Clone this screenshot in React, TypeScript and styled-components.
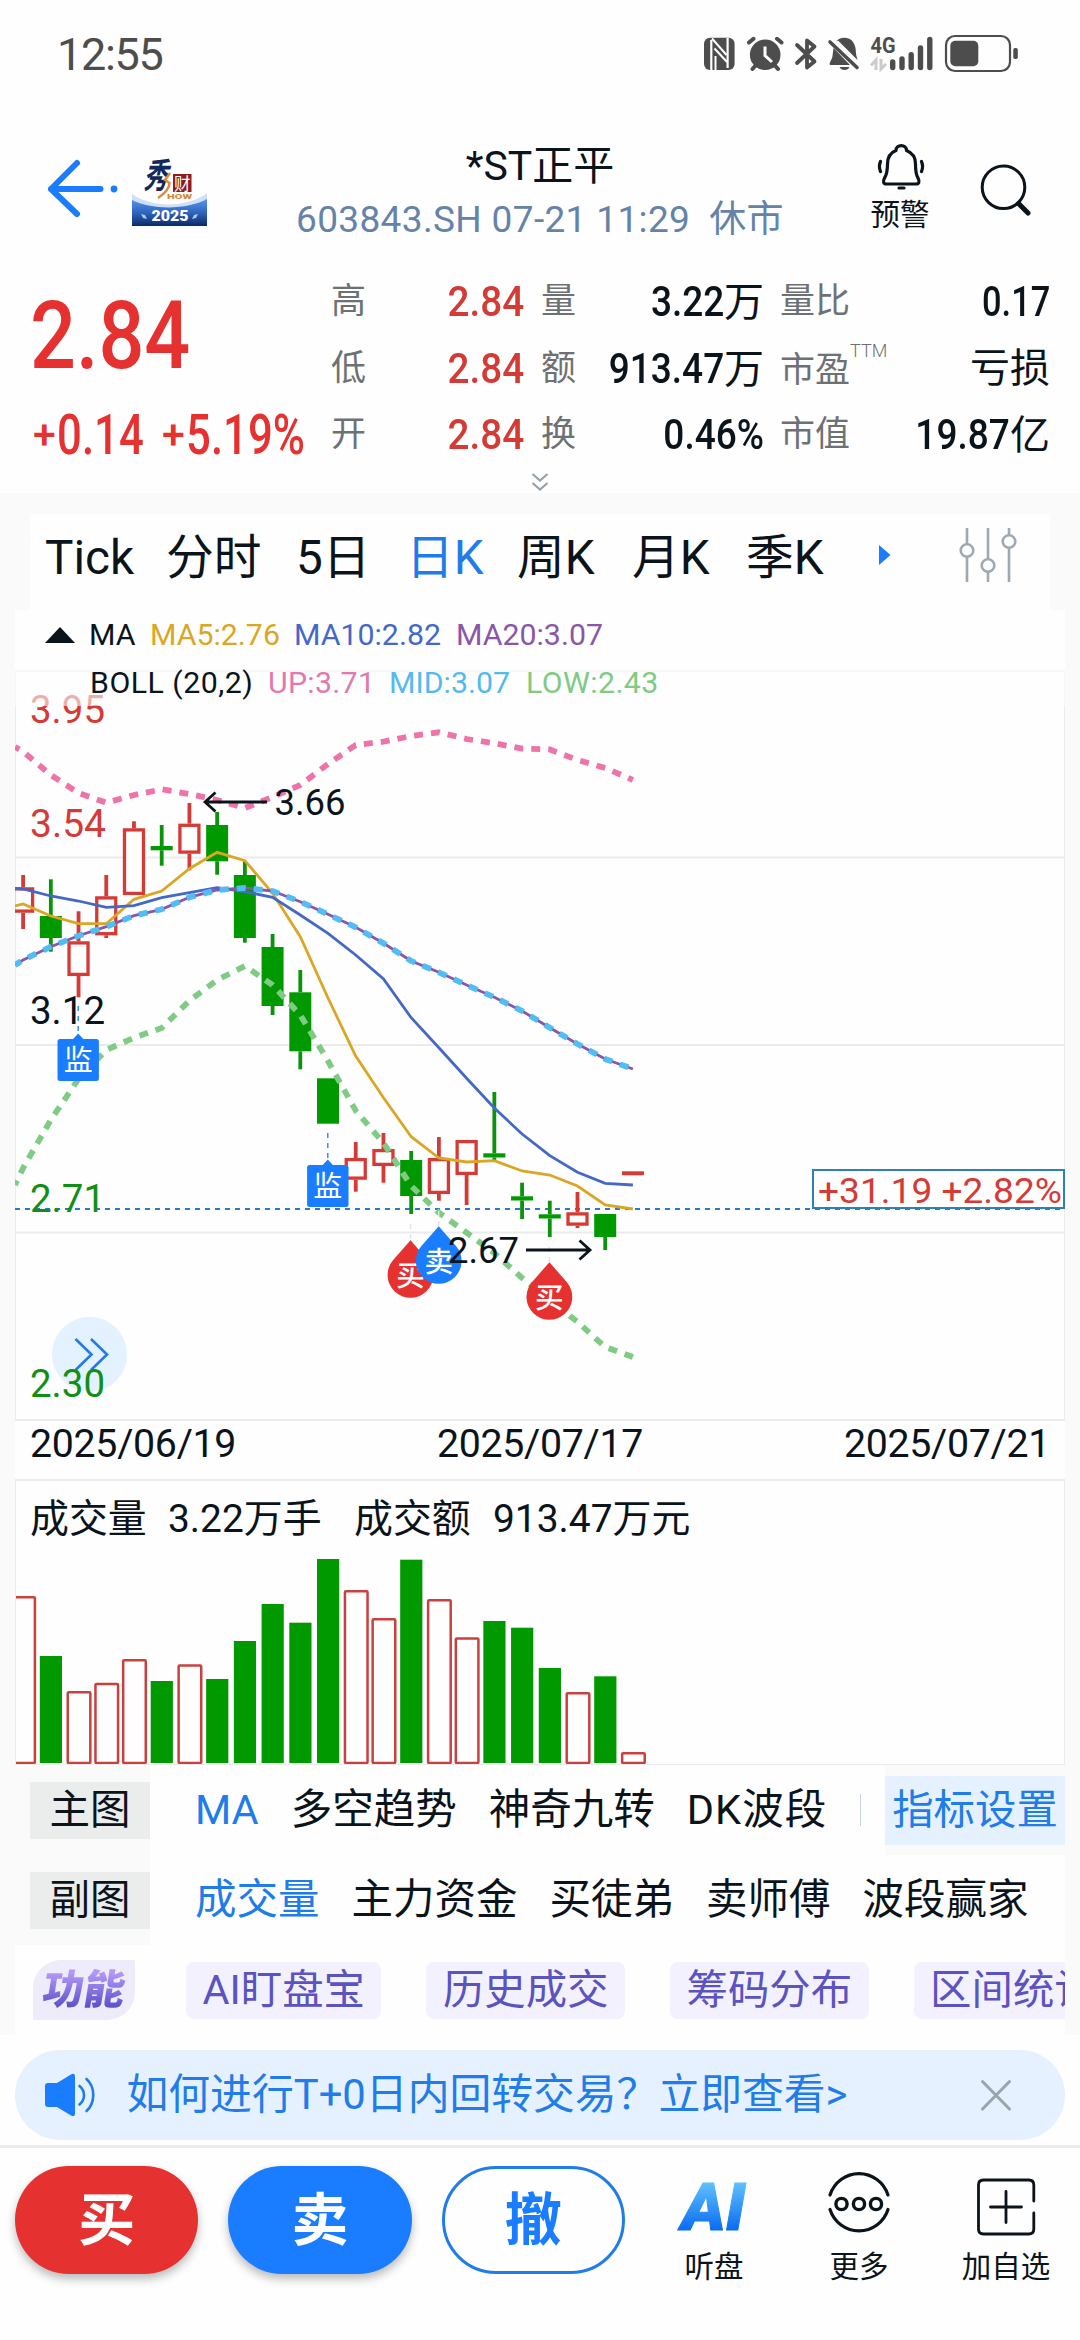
import React from "react";
import styled, { createGlobalStyle } from "styled-components";

const INK = "#0b131b";
const BLUE = "#1a7dff";
const LINK = "#1f7ce8";
const RED = "#e63131";
const UP = "#d43a36";
const DOWN = "#009900";
const GREY = "#6e7174";
const FONT = `Roboto, "Noto Sans CJK SC", sans-serif`;

const Global = createGlobalStyle`
  * { box-sizing: border-box; }
  body { margin: 0; background: #fefefe; }
`;

const Screen = styled.div`
  width: 1080px;
  height: 2340px;
  display: flex;
  flex-direction: column;
  overflow: hidden;
  background: #fefefe;
  color: ${INK};
  font-family: ${FONT};
  white-space: nowrap;
`;

/* ---------- status bar ---------- */
const StatusBar = styled.div`
  height: 108px;
  padding: 0 60px 0 57px;
  display: flex;
  align-items: center;
  justify-content: space-between;
  color: #4d4d4d;
`;
const Clock = styled.div`
  font-size: 45px;
  line-height: 54px;
  letter-spacing: -1.3px;
  padding-top: 1px;
`;

/* ---------- header ---------- */
const Header = styled.header`
  height: 160px;
  display: grid;
  grid-template-columns: 240px 600px 120px 1fr;
`;
const HeaderLeft = styled.div`
  display: flex;
  align-items: flex-start;
  padding: 48px 0 0 40px;
`;
const Titles = styled.div`
  display: flex;
  flex-direction: column;
  align-items: center;
  padding-top: 31px;
`;
const Title = styled.div`
  font-size: 41px;
  line-height: 54px;
`;
const SubTitle = styled.div`
  font-size: 37px;
  line-height: 50px;
  letter-spacing: 0.35px;
  margin-top: 2px;
  white-space: pre;
  color: #6583a9;
`;
const Alert = styled.div`
  display: flex;
  flex-direction: column;
  align-items: center;
  gap: 6px;
  padding-top: 35px;
  font-size: 29.5px;
  line-height: 36px;
`;
const SearchBox = styled.div`
  padding: 52px 0 0 18px;
`;

/* ---------- quote ---------- */
const Quote = styled.section`
  height: 225px;
  display: grid;
  grid-template-columns: 331px 749px;
  grid-template-rows: 200px 25px;
`;
const PriceBox = styled.div`
  padding-left: 30px;
  color: ${RED};
  font-weight: 500;
`;
const Price = styled.div`
  font-size: 94px;
  line-height: 100px;
  margin-top: 18px;
  transform: scaleX(0.86);
  transform-origin: left;
`;
const Change = styled.div`
  display: flex;
  align-items: center;
  margin-top: 16px;
  height: 66px;
  font-size: 56px;
  line-height: 66px;
`;
const Plus = styled.span<{ $ml?: number }>`
  font-size: 41px;
  width: 24px;
  margin-left: ${(p) => p.$ml ?? 0}px;
  padding-left: 3px;
`;
const ChangeNum = styled.span<{ $w: number }>`
  width: ${(p) => p.$w}px;
  padding-left: 4px;
  transform: scaleX(0.78);
  transform-origin: left;
`;
const Stats = styled.div`
  display: grid;
  grid-template-columns: 60px 133px 17px 40px 183px 16px 75px 1fr;
  grid-template-rows: repeat(3, 66.5px);
  align-items: center;
  padding: 1px 30px 0 0;
`;
const Label = styled.span`
  font-size: 35px;
  line-height: 50px;
  color: ${GREY};
`;
const TTM = styled.sup`
  font-size: 18px;
  line-height: 1;
  vertical-align: 25px;
  font-weight: 300;
`;
const Value = styled.span<{ $c?: string }>`
  font-size: 40px;
  line-height: 50px;
  text-align: right;
  color: ${(p) => p.$c ?? INK};
`;
const Din = styled.span<{ $sx?: number }>`
  display: inline-block;
  font-size: 43px;
  font-weight: 500;
  transform: scaleX(${(p) => p.$sx ?? 0.86});
  transform-origin: right;
`;
const Expand = styled.div`
  grid-column: 1 / 3;
  display: flex;
  justify-content: center;
  padding-top: 4px;
`;

/* ---------- body ---------- */
const Body = styled.main`
  height: 1542px;
  padding: 21px 15px 0;
  background: #fafafa;
`;
const Tabs = styled.nav`
  height: 96px;
  margin: 0 15px;
  padding-left: 15px;
  background: #fefefe;
  display: grid;
  grid-template-columns: 121px 130px 110px 111px 115px 114px 132px 77px 1fr;
  align-items: center;
  font-size: 47.7px;
  line-height: 60px;
  padding-bottom: 8px;
`;
const Tab = styled.span<{ $on?: boolean }>`
  color: ${(p) => (p.$on ? LINK : INK)};
`;
const TabIcon = styled.svg`
  margin-top: -6px;
`;
const ChartPanel = styled.section`
  background: #fefefe;
`;
const Legend = styled.div`
  position: relative;
  height: 96px;
  margin-bottom: -36px;
`;
const LegendRow = styled.div<{ $h: number; $veil?: boolean }>`
  display: flex;
  align-items: center;
  height: ${(p) => p.$h}px;
  padding-left: 75px;
  font-size: 30.3px;
  line-height: 36px;
  background: ${(p) => (p.$veil ? "rgba(254,254,254,.6)" : "none")};
`;
const Key = styled.span<{ $c?: string; $w: number; $ls?: number }>`
  color: ${(p) => p.$c ?? INK};
  width: ${(p) => p.$w}px;
  letter-spacing: ${(p) => p.$ls ?? 0}px;
  white-space: pre;
`;
const Caret = styled.svg`
  margin: 0 14px 0 -45px;
`;
const Block = styled.svg`
  display: block;
`;
const Dates = styled.div`
  height: 58px;
  padding: 0 15px;
  display: flex;
  align-items: center;
  justify-content: space-between;
  font-size: 39.3px;
  line-height: 46px;
  letter-spacing: -0.3px;
  padding-bottom: 12px;
`;
const VolumePanel = styled.section`
  height: 286px;
  border: 2px solid #ebebeb;
  border-left-width: 1px;
  border-right-width: 1px;
  border-bottom-width: 1px;
`;
const VolumeText = styled.div`
  height: 75px;
  padding-left: 14px;
  white-space: pre;
  display: flex;
  align-items: center;
  font-size: 38.9px;
  line-height: 50px;
`;
const VolItem = styled.span<{ $w?: number }>`
  width: ${(p) => (p.$w ? p.$w + "px" : "auto")};
`;

const Row = styled.div`
  display: flex;
  height: 90px;
  align-items: center;
`;
const RowHead = styled.div`
  width: 135px;
  flex: none;
  padding-left: 15px;
`;
const HeadTag = styled.div`
  height: 57px;
  line-height: 56px;
  background: #ebeded;
  text-align: center;
  font-size: 40.5px;
`;
const Options = styled.div`
  flex: 1;
  align-self: stretch;
  display: flex;
  align-items: center;
  gap: 32px;
  padding-left: 45px;
  background: #fefefe;
  font-size: 41.5px;
  line-height: 56px;
`;
const Opt = styled.span<{ $on?: boolean; $ls?: number }>`
  color: ${(p) => (p.$on ? LINK : INK)};
  letter-spacing: ${(p) => p.$ls ?? 0}px;
`;
const Bar = styled.i`
  width: 1px;
  height: 32px;
  margin-left: 1px;
  background: #c5d8ea;
`;
const Settings = styled.div`
  width: 180px;
  height: 69px;
  line-height: 69px;
  text-align: center;
  background: #e5f1fe;
  color: ${LINK};
  font-size: 41.4px;
`;
const FuncRow = styled.div`
  height: 90px;
  display: flex;
  align-items: center;
  padding-left: 18px;
  gap: 45px;
  overflow: hidden;
  background: #fefefe;
`;
const FuncBadge = styled.div`
  flex: none;
  width: 102px;
  height: 60px;
  margin-right: 6px;
  border-radius: 28px 2px 28px 2px;
  background: #eeebfa;
  display: flex;
  align-items: center;
  justify-content: center;
`;
const FuncText = styled.span`
  font-size: 41px;
  line-height: 50px;
  font-weight: 900;
  transform: skewX(-9deg);
  color: transparent;
  background: linear-gradient(#b39af8 15%, #5b50c8 85%);
  background-clip: text;
  -webkit-background-clip: text;
`;
const Chip = styled.span`
  flex: none;
  height: 57px;
  line-height: 57px;
  padding: 0 16.5px;
  border-radius: 8px;
  background: #f2f1fd;
  color: #5b53c0;
  font-size: 41.4px;
`;

/* ---------- bottom ---------- */
const Ticker = styled.div`
  height: 90px;
  margin: 15px 15px 5px;
  border-radius: 45px;
  background: #e5f1fe;
  display: flex;
  align-items: center;
  padding: 0 53px 0 29px;
  color: ${LINK};
  font-size: 41.8px;
  line-height: 56px;
`;
const TickerText = styled.span`
  flex: 1;
  margin-left: 29.5px;
`;
const BottomBar = styled.footer`
  flex: 1;
  border-top: 3px solid #ebebeb;
  display: flex;
  align-items: flex-start;
  padding: 18px 0 0 15px;
`;
const Trade = styled.button<{ $bg: string; $outline?: boolean }>`
  width: 184px;
  height: 108px;
  margin: 0 30px 0 0;
  padding: 1px 0 0;
  border-radius: 54px;
  border: ${(p) => (p.$outline ? `3px solid ${LINK}` : "none")};
  background: ${(p) => p.$bg};
  color: ${(p) => (p.$outline ? BLUE : "#fefefe")};
  box-shadow: ${(p) => (p.$outline ? "none" : "0 5px 10px rgba(0,0,0,.27)")};
  font: 700 57px/80px ${FONT};
`;
const Tools = styled.div`
  flex: 1;
  margin-left: -13px;
  display: grid;
  grid-template-columns: 144px 146px 148px;
`;
const Tool = styled.div`
  display: flex;
  flex-direction: column;
  align-items: center;
  font-size: 29.5px;
  line-height: 42px;
`;

/* ---------- data ---------- */
const STEP = 27.72;
const cx = (i: number) => 23.1 + i * STEP;

// [up?, high, bodyTop, bodyBottom, low]
const candles: [boolean, number, number, number, number][] = [
  [true, 875, 887.3, 912.7, 929],
  [false, 879.3, 916, 938, 951.7],
  [true, 911.3, 941.3, 976, 997.3],
  [true, 875, 896.3, 935.3, 938],
  [true, 821.3, 828.3, 895, 895],
  [false, 825, 846, 850.3, 865.7],
  [true, 803, 823.7, 853.7, 870.3],
  [false, 812, 825, 861.3, 874.7],
  [false, 861.3, 875, 938, 942.7],
  [false, 934, 947, 1006, 1015],
  [false, 970, 992.3, 1051.3, 1069.3],
  [false, 1078.3, 1078.3, 1123.7, 1123.7],
  [true, 1142, 1158, 1179.7, 1191.7],
  [true, 1133, 1149, 1166, 1182.7],
  [false, 1151, 1160, 1196, 1214],
  [true, 1137, 1158, 1194, 1200.7],
  [true, 1140, 1140, 1175, 1205],
  [false, 1092, 1153.3, 1157.5, 1160],
  [false, 1182.7, 1196.3, 1200.5, 1219],
  [false, 1200.7, 1214.3, 1218.5, 1237],
  [true, 1192, 1212.3, 1225.7, 1228],
  [false, 1214, 1214, 1237, 1250],
  [true, 1171.3, 1171.3, 1175.3, 1175.3],
];

const volumes = [
  1596, 1656, 1691, 1682.7, 1659, 1681, 1664.3, 1679, 1641, 1604, 1622.7, 1559,
  1590, 1618, 1559.7, 1599, 1637.3, 1621, 1627.7, 1668, 1692, 1676.3, 1752,
];

const ma5 = [904, 916, 923.7, 923.7, 899.3, 891, 868.7, 852.3, 860.7, 893.3, 936.7, 998, 1056, 1097.7, 1136.7, 1158, 1162, 1160.7, 1171, 1175, 1186, 1205, 1209];
const ma10 = [889, 896, 901, 907.3, 905.7, 897.7, 892.7, 887.7, 891.7, 897.3, 915, 933.3, 955, 979, 1017.7, 1047.7, 1078.3, 1108, 1134, 1155.7, 1172.3, 1183.3, 1185];
const ma20 = [960, 946.7, 935.7, 926.7, 915.7, 909.3, 897.3, 890, 888, 891, 901.7, 914.3, 927.3, 943.3, 961, 972.3, 985, 997.3, 1011, 1027.7, 1044, 1059, 1069];
const bollUp = [751.7, 775, 793, 802.7, 795, 789.3, 794, 800, 808, 797, 785, 764, 745, 741.7, 736, 732.3, 739, 743.3, 748.7, 749.5, 760, 768, 780];
const bollLow = [1168, 1120, 1079, 1050, 1037.7, 1028, 1000.7, 980, 966, 985, 1015, 1061, 1110.7, 1143, 1186, 1212.7, 1232.7, 1253, 1278, 1300, 1322, 1347, 1357];

const line = (first: number, ys: number[]) =>
  `15,${first} ` + ys.map((y, i) => `${cx(i).toFixed(1)},${y}`).join(" ");

const SvgText = ({ x, y, w, size, fill = INK, weight = 400, children }: {
  x: number; y: number; w: number; size: number; fill?: string; weight?: number; children: string;
}) => (
  <text x={x} y={y} textLength={w} lengthAdjust="spacingAndGlyphs" fontSize={size} fill={fill} fontWeight={weight} fontFamily={FONT}>
    {children}
  </text>
);

const WatchTag = ({ x, y, from }: { x: number; y: number; from: number }) => (
  <g>
    <path d={`M${x} ${from}V${y - 5}`} stroke={LINK} strokeWidth="1.3" strokeDasharray="5 5" />
    <rect x={x - 20.7} y={y} width="41.4" height="42" rx="2.5" fill={BLUE} />
    <path d={`M${x - 6} ${y + 1}l6 -6.5l6 6.5z`} fill={BLUE} />
    <SvgText x={x - 14.5} y={y + 32} w={29} size={29} fill="#fff">监</SvgText>
  </g>
);

const Drop = ({ x, y, from, fill, children }: { x: number; y: number; from: number; fill: string; children: string }) => (
  <g>
    <path d={`M${x} ${from}V${y - 34}`} stroke="#e2e4e6" strokeWidth="1.5" strokeDasharray="5 5" />
    <path d={`M${x} ${y - 34.5}L${x + 17.5} ${y - 14.5}A22.9 22.9 0 1 1 ${x - 17.5} ${y - 14.5}Z`} fill={fill} />
    <SvgText x={x - 14.3} y={y + 11} w={28.6} size={28.6} fill="#fff" weight={500}>{children}</SvgText>
  </g>
);

const PriceChart = () => (
  <Block width="1050" height="751" viewBox="15 670 1050 751">
    <g stroke="#ebebeb" strokeWidth="2">
      <path d="M15 671H1065M15 857.5H1065M15 1045H1065M15 1232.5H1065M15 1420H1065" />
      <path d="M15.5 670V1420M1064.5 670V1420" strokeWidth="1" />
    </g>
    <SvgText x={30} y={723} w={75} size={39.5} fill={UP}>3.95</SvgText>
    <SvgText x={30} y={837} w={76} size={39.5} fill={UP}>3.54</SvgText>
    <path d="M15 1209H1065" stroke="#2a78cc" strokeWidth="2" strokeDasharray="5 5" />
    {candles.map(([up, hi, top, bot, lo], i) => {
      const x = cx(i);
      const c = up ? UP : "#0b930b";
      return (
        <g key={i}>
          {hi < top && <rect x={x - 1.9} y={hi} width="3.8" height={top - hi} fill={c} />}
          {lo > bot && <rect x={x - 1.9} y={bot} width="3.8" height={lo - bot} fill={c} />}
          {up && bot - top > 6 ? (
            <rect x={x - 9.5} y={top + 1.6} width="19" height={bot - top - 3.2} fill="#fefefe" stroke={UP} strokeWidth="3.3" />
          ) : (
            <rect x={x - 11} y={top} width="22" height={bot - top} fill={up ? UP : DOWN} />
          )}
        </g>
      );
    })}
    <g fill="none" strokeWidth="2.8">
      <polyline points={line(906, ma5)} stroke="#dba623" />
      <polyline points={line(888.3, ma10)} stroke="#4468c8" />
      <polyline points={line(965, ma20)} stroke="#8a56a8" />
      <polyline points={line(965, ma20)} stroke="#52bdf3" strokeWidth="5.8" strokeDasharray="9 8" strokeDashoffset="2" />
      <polyline points={line(747, bollUp)} stroke="#ee73a9" strokeWidth="5.8" strokeDasharray="9 8" strokeDashoffset="4" />
      <polyline points={line(1185, bollLow)} stroke="#7fcb84" strokeWidth="5.8" strokeDasharray="9 8" strokeDashoffset="4" />
    </g>

    <circle cx="89.5" cy="1354.3" r="37.5" fill="#e4f1fe" />
    <path d="M75.5 1339l16 15.5l-16 15.5M91 1339l16 15.5l-16 15.5" fill="none" stroke={LINK} strokeWidth="2.6" />

    <SvgText x={30} y={1024} w={75} size={39.5}>3.12</SvgText>
    <SvgText x={30} y={1212} w={75} size={39.5} fill="#0f8f14">2.71</SvgText>
    <SvgText x={30} y={1397} w={75} size={39.5} fill="#0f8f14">2.30</SvgText>

    <WatchTag x={78.2} y={1039} from={1006} />
    <WatchTag x={327.8} y={1165} from={1133} />
    <Drop x={410.5} y={1274.7} from={1224} fill={RED}>买</Drop>
    <Drop x={438.7} y={1260.7} from={1211} fill={BLUE}>卖</Drop>
    <Drop x={549.4} y={1296.7} from={1247} fill={RED}>买</Drop>

    <g fill="none" stroke={INK} strokeWidth="2.8">
      <path d="M267 802H205M215.5 792.5L205 802L215.5 811.5" />
      <path d="M526 1250H590M579.5 1240.5L590 1250L579.5 1259.5" />
    </g>
    <SvgText x={274.5} y={815} w={71} size={37}>3.66</SvgText>
    <SvgText x={448} y={1263} w={71} size={37}>2.67</SvgText>

    <rect x="813" y="1170" width="251" height="38" fill="#fefefe" stroke="#2f7fb8" strokeWidth="2" />
    <SvgText x={818} y={1202.5} w={244} size={35.5} fill={UP}>+31.19 +2.82%</SvgText>
  </Block>
);

const VolumeChart = () => (
  <Block width="1048" height="208" viewBox="16 1556 1048 208">
    {volumes.map((top, i) => {
      const x = cx(i);
      return candles[i][0] ? (
        <rect key={i} x={x - 10.8} y={top + 1.3} width="22.6" height={1761.7 - top} rx="1" fill="#fefefe" stroke="#c9413f" strokeWidth="2.5" />
      ) : (
        <rect key={i} x={x - 11} y={top} width="22.2" height={1763 - top} fill={DOWN} />
      );
    })}
  </Block>
);

const StatusIcons = () => (
  <svg width="316" height="40" viewBox="704 34 316 40" fill="none" stroke="#4d4d4d">
    <rect x="704" y="37.7" width="30.6" height="32.3" rx="6" fill="#4d4d4d" stroke="none" />
    <path d="M711.3 40V70M727.6 38V68" stroke="#fefefe" strokeWidth="2.2" />
    <path d="M712 38.500L726.500 55M714.500 48.500L727 62M715.500 56V70" stroke="#fefefe" strokeWidth="2" />
    <circle cx="765.2" cy="54.7" r="15.3" fill="#4d4d4d" stroke="none" />
    <path d="M765 46.5V55.5L772 62" stroke="#fefefe" strokeWidth="3" />
    <path d="M749 42.5L753.5 38.8M781.5 42.5L777 38.8M752.5 69L756 65M778 69L774.5 65" strokeWidth="4" strokeLinecap="round" />
    <path d="M797 45L814.5 61.5L807 67.5V40.5L814.5 46.5L797 63" strokeWidth="3.8" strokeLinejoin="round" strokeLinecap="round" />
    <path d="M836 41.5C839 37 849 36 853 42C857 48 855 52 857 58L857.5 60L838 40.5z" fill="#4d4d4d" stroke="none" />
    <path d="M833.5 48L850 65H830C828.5 63 832 60 832.5 56z" fill="#4d4d4d" stroke="none" />
    <path d="M839.5 67H849.5C848 71 841 71 839.5 67z" fill="#4d4d4d" stroke="none" />
    <path d="M830 42L857 67.5" strokeWidth="3.6" strokeLinecap="round" />
    <text x="870.5" y="53" fontSize="21.5" fontWeight="700" textLength="25" lengthAdjust="spacingAndGlyphs" fill="#4d4d4d" stroke="none" fontFamily={FONT}>4G</text>
    <path d="M876 70V60L871 65.5M881 59V69L886 64" stroke="#cccccc" strokeWidth="3" />
    <path d="M892.7 62V67.5M902 59V67.5M911.2 54.8V67.5M920.5 48V67.5M929.8 39.5V67.5" strokeWidth="5.4" strokeLinecap="round" />
    <rect x="946" y="36" width="64" height="35" rx="9" strokeWidth="2.2" />
    <rect x="950.3" y="40.8" width="28" height="25.5" rx="5" fill="#4d4d4d" stroke="none" />
    <rect x="1013.3" y="48" width="4.5" height="11" rx="1.8" fill="#4d4d4d" stroke="none" />
  </svg>
);

const Logo = () => (
  <svg width="75" height="70" viewBox="0 0 75 70">
    <defs>
      <linearGradient id="sky" x1="0" y1="0" x2="0" y2="1">
        <stop offset="0" stopColor="#5d92ea" />
        <stop offset="0.5" stopColor="#2f66bd" />
        <stop offset="1" stopColor="#0b2a66" />
      </linearGradient>
    </defs>
    <path d="M0 38C20 52 55 52 75 37V70H0z" fill="#cfe0fa" />
    <path d="M0 44C20 54 55 54 75 43V70H0z" fill="url(#sky)" />
    <text x="0" y="0" transform="translate(11 32) skewX(-14) scale(.78 1.12)" fontSize="31" fontWeight="700" fill="#12285a" fontFamily={FONT}>秀</text>
    <path d="M38 17L33 24L37.500 27C37.500 33 32 38 26 42" fill="none" stroke="#e08a3a" strokeWidth="2.4" />
    <rect x="41" y="18" width="18.500" height="18" fill="#8c1d1d" />
    <text x="42" y="33.5" fontSize="16.5" fill="#fff" fontFamily={FONT}>财</text>
    <text x="35" y="43" fontSize="7" fontWeight="900" fill="#d98a3c" textLength="25" lengthAdjust="spacingAndGlyphs" fontFamily={FONT}>HOW</text>
    <text x="19.5" y="65" fontSize="14.5" fontWeight="900" fill="#fff" textLength="37" lengthAdjust="spacingAndGlyphs" fontFamily={FONT}>2025</text>
    <path d="M9 58l4 1l2 4l-4 -1zM66 58l-4 1l-2 4l4 -1z" fill="#a9c8f5" />
  </svg>
);

export default function App() {
  return (
    <Screen>
      <Global />
      <StatusBar>
        <Clock>12:55</Clock>
        <StatusIcons />
      </StatusBar>

      <Header>
        <HeaderLeft>
          <svg width="92" height="66" viewBox="40 156 92 66" fill="none" stroke={BLUE} strokeWidth="6" strokeLinecap="round" strokeLinejoin="round">
            <path d="M77 163L51 189L77 214M51 189H100.5" />
            <circle cx="114" cy="189" r="3.4" fill={BLUE} stroke="none" />
          </svg>
          <Logo />
        </HeaderLeft>
        <Titles>
          <Title>*ST正平</Title>
          <SubTitle>603843.SH 07-21 11:29  休市</SubTitle>
        </Titles>
        <Alert>
          <svg width="50" height="48" viewBox="875 143 50 48" fill="none" stroke={INK} strokeWidth="3.2" strokeLinejoin="round" strokeLinecap="round">
            <path d="M896 150.5C896 144 906.500 144 906.500 150.500C913 153 915.5 158 915.5 164C915.5 172 916 175 918 178C920 182 919 184 916 184H886.500C883.500 184 882.500 182 884.500 178C886.500 175 887.500 172 887.500 164C887.500 158 889.500 153 896 150.500z" />
            <path d="M899 188H904M880.500 161.500C879 165 879 168 880.500 171.500M921.500 161.500C923 165 923 168 921.500 171.500" />
          </svg>
          预警
        </Alert>
        <SearchBox>
          <svg width="60" height="60" viewBox="978 160 60 60" fill="none" stroke={INK} strokeLinecap="round">
            <circle cx="1003.5" cy="187.3" r="21.3" strokeWidth="3" />
            <path d="M1018.500 203.500L1028 213" strokeWidth="5" />
          </svg>
        </SearchBox>
      </Header>

      <Quote>
        <PriceBox>
          <Price>2.84</Price>
          <Change>
            <Plus>+</Plus>
            <ChangeNum $w={93}>0.14</ChangeNum>
            <Plus $ml={12}>+</Plus>
            <ChangeNum $w={120}>5.19%</ChangeNum>
          </Change>
        </PriceBox>
        <Stats>
          <Label>高</Label>
          <Value $c={UP}><Din $sx={0.9}>2.84</Din></Value>
          <i />
          <Label>量</Label>
          <Value><Din>3.22</Din>万</Value>
          <i />
          <Label>量比</Label>
          <Value><Din $sx={0.8}>0.17</Din></Value>

          <Label>低</Label>
          <Value $c={UP}><Din $sx={0.9}>2.84</Din></Value>
          <i />
          <Label>额</Label>
          <Value><Din>913.47</Din>万</Value>
          <i />
          <Label>市盈<TTM>TTM</TTM></Label>
          <Value>亏损</Value>

          <Label>开</Label>
          <Value $c={UP}><Din $sx={0.9}>2.84</Din></Value>
          <i />
          <Label>换</Label>
          <Value><Din>0.46%</Din></Value>
          <i />
          <Label>市值</Label>
          <Value><Din>19.87</Din>亿</Value>
        </Stats>
        <Expand>
          <svg width="18" height="20" viewBox="0 0 18 20" fill="none" stroke="#98a1aa" strokeWidth="2.3">
            <path d="M1.500 2L9 8.500L16.500 2M1.500 11L9 17.500L16.500 11" />
          </svg>
        </Expand>
      </Quote>

      <Body>
        <Tabs>
          <Tab>Tick</Tab>
          <Tab>分时</Tab>
          <Tab>5日</Tab>
          <Tab $on>日K</Tab>
          <Tab>周K</Tab>
          <Tab>月K</Tab>
          <Tab>季K</Tab>
          <TabIcon width="14" height="22" viewBox="0 0 14 22"><path d="M1 1L12.500 11L1 21z" fill={BLUE} /></TabIcon>
          <TabIcon width="64" height="56" viewBox="954 528 64 56" fill="none" stroke="#9fa9b1" strokeWidth="2.6">
            <path d="M966 529V545M966 558V583M987 529V560M987 573V583M1008 529V536M1008 549V583" />
            <circle cx="966" cy="551.5" r="6.3" />
            <circle cx="987" cy="566.5" r="6.3" />
            <circle cx="1008" cy="542.5" r="6.3" />
          </TabIcon>
        </Tabs>

        <ChartPanel>
          <Legend>
            <LegendRow $h={49}>
              <Caret width="30" height="16" viewBox="0 0 30 16"><path d="M0 16L15 0L30 16z" fill={INK} /></Caret>
              <Key $w={61}>MA</Key>
              <Key $w={144} $c="#dba623">MA5:2.76</Key>
              <Key $w={162} $c="#4468c8">MA10:2.82</Key>
              <Key $w={160} $c="#8a56a8">MA20:3.07</Key>
            </LegendRow>
            <LegendRow $h={47} $veil>
              <Key $w={178} $ls={0.5}>BOLL (20,2)</Key>
              <Key $w={121} $c="#e378ae" $ls={0.3}>UP:3.71</Key>
              <Key $w={137} $c="#55b9ee">MID:3.07</Key>
              <Key $w={140} $c="#7fcb84" $ls={0.4}>LOW:2.43</Key>
            </LegendRow>
          </Legend>
          <PriceChart />
          <Dates>
            <span>2025/06/19</span>
            <span>2025/07/17</span>
            <span>2025/07/21</span>
          </Dates>
          <VolumePanel>
            <VolumeText>
              <VolItem $w={138}>成交量</VolItem>
              <VolItem $w={186}>3.22万手</VolItem>
              <VolItem $w={139}>成交额</VolItem>
              <VolItem>913.47万元</VolItem>
            </VolumeText>
            <VolumeChart />
          </VolumePanel>
        </ChartPanel>

        <Row>
          <RowHead><HeadTag>主图</HeadTag></RowHead>
          <Options>
            <Opt $on>MA</Opt>
            <Opt>多空趋势</Opt>
            <Opt>神奇九转</Opt>
            <Opt $ls={1.1}>DK波段</Opt>
            <Bar />
          </Options>
          <Settings>指标设置</Settings>
        </Row>
        <Row>
          <RowHead><HeadTag>副图</HeadTag></RowHead>
          <Options>
            <Opt $on>成交量</Opt>
            <Opt>主力资金</Opt>
            <Opt>买徒弟</Opt>
            <Opt>卖师傅</Opt>
            <Opt>波段赢家</Opt>
          </Options>
        </Row>
        <FuncRow>
          <FuncBadge><FuncText>功能</FuncText></FuncBadge>
          <Chip>AI盯盘宝</Chip>
          <Chip>历史成交</Chip>
          <Chip>筹码分布</Chip>
          <Chip>区间统计</Chip>
        </FuncRow>
      </Body>

      <Ticker>
        <svg width="53" height="46" viewBox="44 2070 53 46" fill="none" stroke={LINK} strokeWidth="2.6" strokeLinecap="round">
          <path d="M48 2081H57L71 2072.500C73.500 2071 75 2072 75 2074.500V2111.500C75 2114 73.500 2115 71 2113.500L57 2105H48C46 2105 45 2104 45 2102V2084C45 2082 46 2081 48 2081z" fill={BLUE} stroke="none" />
          <path d="M79.500 2084C85.500 2089 85.500 2097.500 79.500 2102.500M86.500 2077C95.500 2085 95.500 2101 86.500 2109" />
        </svg>
        <TickerText>如何进行T+0日内回转交易？立即查看&gt;</TickerText>
        <svg width="32" height="32" viewBox="0 0 32 32" stroke="#9aa4ad" strokeWidth="3" strokeLinecap="round">
          <path d="M2.500 2.500L29.500 30M29.500 2.500L2.500 30" />
        </svg>
      </Ticker>

      <BottomBar>
        <Trade $bg={RED}>买</Trade>
        <Trade $bg={BLUE}>卖</Trade>
        <Trade $bg="#fefefe" $outline>撤</Trade>
        <Tools>
          <Tool>
            <svg width="80" height="80" viewBox="0 0 80 80">
              <defs>
                <linearGradient id="ai" x1="0" y1="0" x2="0" y2="1">
                  <stop offset="0.15" stopColor="#66c6ff" />
                  <stop offset="0.8" stopColor="#0a6cf0" />
                </linearGradient>
              </defs>
              <text x="7.500" y="63.500" fontSize="67" fontWeight="900" fontStyle="italic" textLength="64" lengthAdjust="spacingAndGlyphs" fill="url(#ai)" stroke="url(#ai)" strokeWidth="1" fontFamily={FONT}>AI</text>
            </svg>
            听盘
          </Tool>
          <Tool>
            <svg width="80" height="80" viewBox="819.5 2166 80 80" fill="none" stroke={INK} strokeWidth="3.2" strokeLinecap="round">
              <path d="M830.500 2195A30.500 31 0 0 1 888.500 2195M830.500 2209.500A30.500 31 0 0 0 888.500 2209.500" />
              <circle cx="842" cy="2204" r="5.600" strokeWidth="3.400" />
              <circle cx="859.5" cy="2204" r="5.600" strokeWidth="3.400" />
              <circle cx="876.5" cy="2204" r="5.600" strokeWidth="3.400" />
            </svg>
            更多
          </Tool>
          <Tool>
            <svg width="80" height="80" viewBox="967 2166 80 80" fill="none" stroke={INK} strokeWidth="2.8" strokeLinecap="round">
              <path d="M1034.800 2201V2185Q1034.800 2180 1029.800 2180H984.500Q979.500 2180 979.500 2185V2229Q979.500 2234 984.500 2234H1029.800Q1034.800 2234 1034.800 2229V2213M1007 2191.500V2222.500M991.500 2207H1022.500" />
            </svg>
            加自选
          </Tool>
        </Tools>
      </BottomBar>
    </Screen>
  );
}
